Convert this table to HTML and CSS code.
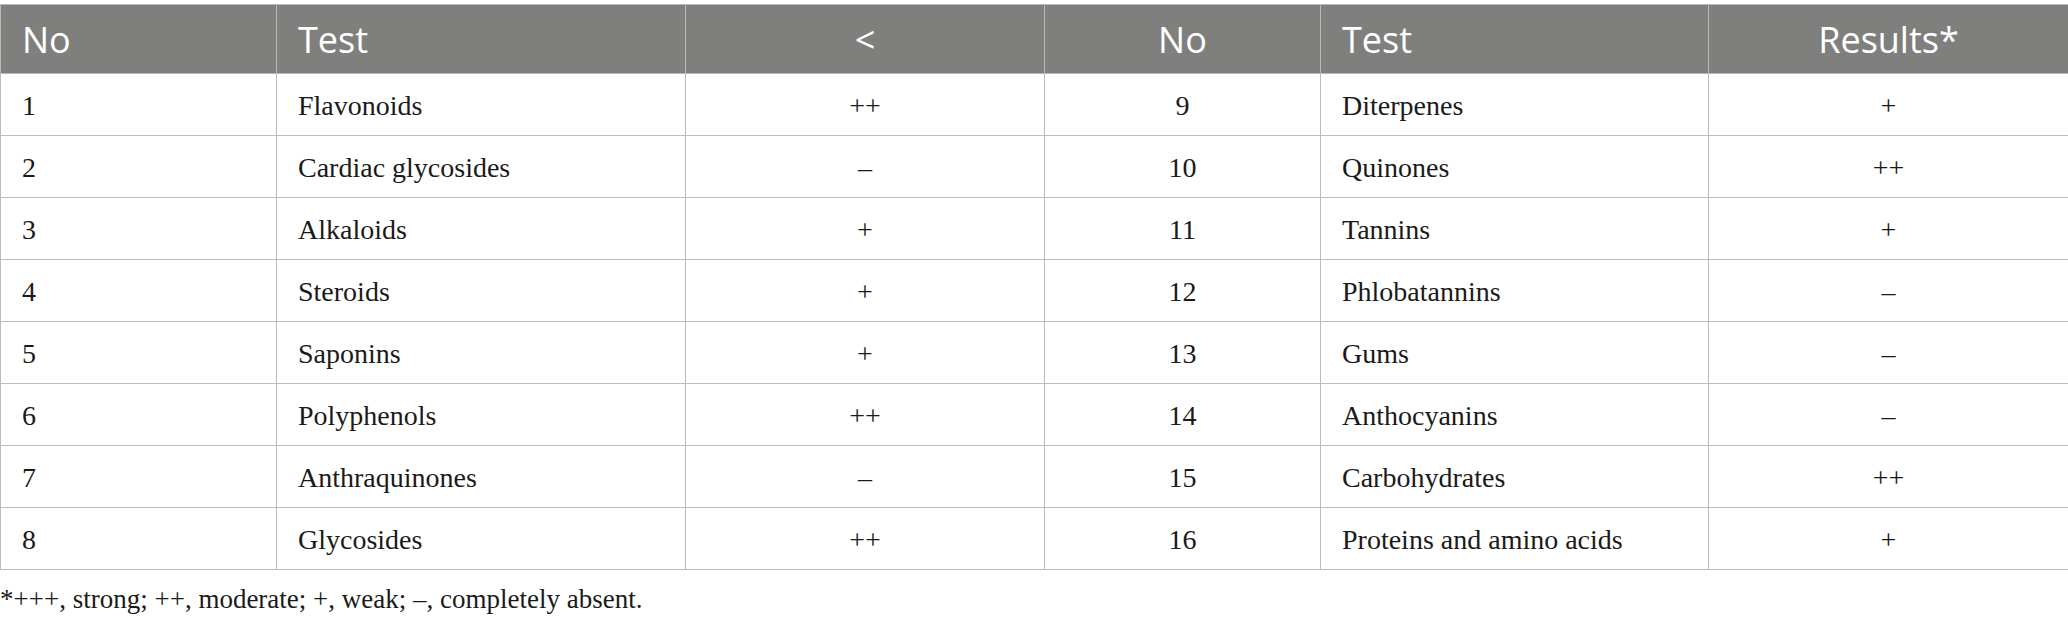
FILE: index.html
```html
<!DOCTYPE html>
<html>
<head>
<meta charset="utf-8">
<link rel="stylesheet" href="styles.css">
</head>
<body>
<div class="page">
<table class="data">
<colgroup>
<col class="c1"><col class="c2"><col class="c3"><col class="c4"><col class="c5"><col class="c6">
</colgroup>
<thead>
<tr><th>No</th><th>Test</th><th class="ctr">&lt;</th><th class="ctr">No</th><th>Test</th><th class="ctr">Results*</th></tr>
</thead>
<tbody>
<tr><td>1</td><td>Flavonoids</td><td class="ctr">++</td><td class="ctr">9</td><td>Diterpenes</td><td class="ctr">+</td></tr>
<tr><td>2</td><td>Cardiac glycosides</td><td class="ctr">–</td><td class="ctr">10</td><td>Quinones</td><td class="ctr">++</td></tr>
<tr><td>3</td><td>Alkaloids</td><td class="ctr">+</td><td class="ctr">11</td><td>Tannins</td><td class="ctr">+</td></tr>
<tr><td>4</td><td>Steroids</td><td class="ctr">+</td><td class="ctr">12</td><td>Phlobatannins</td><td class="ctr">–</td></tr>
<tr><td>5</td><td>Saponins</td><td class="ctr">+</td><td class="ctr">13</td><td>Gums</td><td class="ctr">–</td></tr>
<tr><td>6</td><td>Polyphenols</td><td class="ctr">++</td><td class="ctr">14</td><td>Anthocyanins</td><td class="ctr">–</td></tr>
<tr><td>7</td><td>Anthraquinones</td><td class="ctr">–</td><td class="ctr">15</td><td>Carbohydrates</td><td class="ctr">++</td></tr>
<tr><td>8</td><td>Glycosides</td><td class="ctr">++</td><td class="ctr">16</td><td>Proteins and amino acids</td><td class="ctr">+</td></tr>
</tbody>
</table>
<p class="note">*+++, strong; ++, moderate; +, weak; –, completely absent.</p>
</div>
</body>
</html>
```
FILE: styles.css
```css
html, body {
  margin: 0;
  padding: 0;
  background: #ffffff;
}
.page {
  padding-top: 4px;
}
.data {
  width: 2068px;
  border-collapse: collapse;
  table-layout: fixed;
}
.c1 { width: 276px; }
.c2 { width: 409px; }
.c3 { width: 359px; }
.c4 { width: 276px; }
.c5 { width: 388px; }
.c6 { width: 360px; }
.data th {
  background: #7f807e;
  color: #ffffff;
  font-family: "Open Sans", "Noto Sans", sans-serif;
  font-weight: 400;
  font-size: 36px;
  line-height: 1;
  text-align: left;
  height: 69px;
  padding: 1px 21px 0 21px;
  border: 1px solid #b8b8b8;
  box-sizing: border-box;
}
.data td {
  font-family: "Liberation Serif", serif;
  font-size: 28px;
  line-height: 1;
  color: #1a1a1a;
  height: 62px;
  padding: 3px 21px 0 21px;
  border: 1px solid #bcbcbc;
  box-sizing: border-box;
}
.data .ctr {
  text-align: center;
}
.note {
  margin: 14px 0 0 0;
  font-family: "Liberation Serif", serif;
  font-size: 27px;
  color: #1a1a1a;
}
```
